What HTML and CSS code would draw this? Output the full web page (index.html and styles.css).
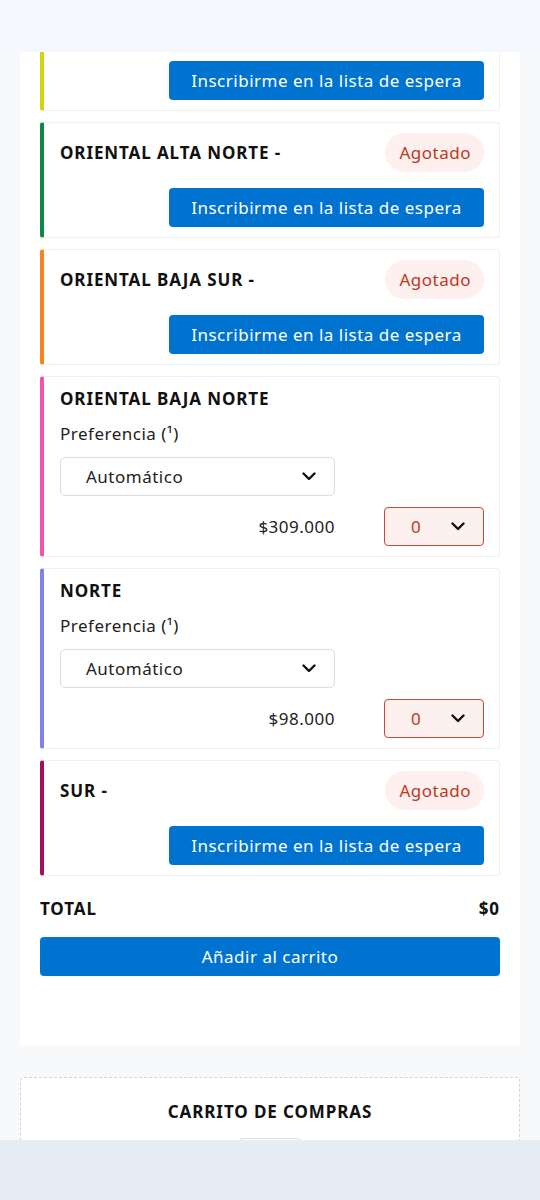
FILE: index.html
```html
<!DOCTYPE html>
<html lang="es">
<head>
    <meta charset="UTF-8">
    <meta name="viewport" content="width=device-width, initial-scale=1.0">
    <title>Entradas</title>
    <link rel="stylesheet" href="styles.css">
</head>
<body>
    <header class="topbar"></header>

    <main class="page">
        <section class="panel">
            <div class="zona zona-cut" style="--c: #d4d40a;">
                <div class="zona-actions">
                    <button class="btn-wait">Inscribirme en la lista de espera</button>
                </div>
            </div>

            <div class="zona" style="--c: #0b8a47;">
                <div class="zona-head">
                    <h3>ORIENTAL ALTA NORTE -</h3>
                    <span class="badge">Agotado</span>
                </div>
                <div class="zona-actions">
                    <button class="btn-wait">Inscribirme en la lista de espera</button>
                </div>
            </div>

            <div class="zona" style="--c: #f7841e;">
                <div class="zona-head">
                    <h3>ORIENTAL BAJA SUR -</h3>
                    <span class="badge">Agotado</span>
                </div>
                <div class="zona-actions">
                    <button class="btn-wait">Inscribirme en la lista de espera</button>
                </div>
            </div>

            <div class="zona" style="--c: #f353ad;">
                <h3 class="zona-title">ORIENTAL BAJA NORTE</h3>
                <p class="pref">Preferencia (¹)</p>
                <div class="select-pref">
                    <span>Automático</span>
                    <svg class="chev" viewBox="0 0 14 9" width="14" height="9"><path d="M1.5 1.5 7 7l5.5-5.5" fill="none" stroke="#111" stroke-width="2.4" stroke-linecap="round" stroke-linejoin="round"/></svg>
                </div>
                <div class="price-row">
                    <span class="price">$309.000</span>
                    <div class="qty">
                        <span>0</span>
                        <svg class="chev" viewBox="0 0 14 9" width="14" height="9"><path d="M1.5 1.5 7 7l5.5-5.5" fill="none" stroke="#111" stroke-width="2.4" stroke-linecap="round" stroke-linejoin="round"/></svg>
                    </div>
                </div>
            </div>

            <div class="zona" style="--c: #7f80f2;">
                <h3 class="zona-title">NORTE</h3>
                <p class="pref">Preferencia (¹)</p>
                <div class="select-pref">
                    <span>Automático</span>
                    <svg class="chev" viewBox="0 0 14 9" width="14" height="9"><path d="M1.5 1.5 7 7l5.5-5.5" fill="none" stroke="#111" stroke-width="2.4" stroke-linecap="round" stroke-linejoin="round"/></svg>
                </div>
                <div class="price-row">
                    <span class="price">$98.000</span>
                    <div class="qty">
                        <span>0</span>
                        <svg class="chev" viewBox="0 0 14 9" width="14" height="9"><path d="M1.5 1.5 7 7l5.5-5.5" fill="none" stroke="#111" stroke-width="2.4" stroke-linecap="round" stroke-linejoin="round"/></svg>
                    </div>
                </div>
            </div>

            <div class="zona" style="--c: #a5105c;">
                <div class="zona-head">
                    <h3>SUR -</h3>
                    <span class="badge">Agotado</span>
                </div>
                <div class="zona-actions">
                    <button class="btn-wait">Inscribirme en la lista de espera</button>
                </div>
            </div>

            <div class="total">
                <span>TOTAL</span>
                <span>$0</span>
            </div>
            <button class="btn-cart">Añadir al carrito</button>
        </section>

        <section class="cart">
            <h2>CARRITO DE COMPRAS</h2>
            <div class="cart-pill"></div>
        </section>
    </main>

    <nav class="bottombar"></nav>
</body>
</html>
```

FILE: styles.css
```css
* {
    box-sizing: border-box;
}

body {
    margin: 0;
    font-family: "Noto Sans", "DejaVu Sans", sans-serif;
    background: #f8f9fb;
    color: #1a1a1a;
    height: 1200px;
    overflow: hidden;
    letter-spacing: 0.5px;
}

.topbar {
    height: 52px;
    background: #f5f8fc;
}

.page {
    padding: 0 20px;
}

.panel {
    background: #fff;
    padding: 0 20px 70px;
}

.zona {
    border: 1px solid #f0f0f0;
    border-left: 4px solid var(--c);
    border-radius: 3px;
    padding: 10px 15px 10px 16px;
    margin-bottom: 11px;
}

.zona-cut {
    border-top: none;
    border-radius: 0 0 3px 3px;
    padding-top: 9px;
}

.zona-head {
    display: flex;
    justify-content: space-between;
    align-items: center;
    margin-bottom: 16px;
}

.zona h3 {
    margin: 0;
    font-size: 17px;
    font-weight: 700;
    color: #111;
    line-height: 24px;
    letter-spacing: 0.9px;
}

.badge {
    background: #fdf0ee;
    color: #c2361f;
    font-size: 17px;
    height: 39px;
    line-height: 39px;
    padding: 0 13px 0 14px;
    border-radius: 20px;
}

.zona-actions {
    display: flex;
    justify-content: flex-end;
}

.btn-wait, .btn-cart {
    background: #0073d1;
    color: #fff;
    border: none;
    border-radius: 4px;
    font-family: inherit;
    font-size: 17px;
    letter-spacing: 0.5px;
    height: 39px;
}

.btn-wait {
    width: 315px;
}

.pref {
    margin: 13px 0 13px;
    font-size: 17px;
    line-height: 20px;
    color: #222;
}

.select-pref {
    width: 275px;
    height: 39px;
    border: 1px solid #dcdcdc;
    border-radius: 5px;
    display: flex;
    align-items: center;
    justify-content: space-between;
    padding: 0 18px 0 25px;
    font-size: 17px;
    color: #222;
}

.price-row {
    display: flex;
    align-items: center;
    margin-top: 11px;
}

.price {
    width: 275px;
    text-align: right;
    font-size: 17px;
    color: #222;
}

.qty {
    margin-left: auto;
    width: 100px;
    height: 39px;
    border: 1px solid #c94a36;
    border-radius: 4px;
    background: #fdf1ef;
    display: flex;
    align-items: center;
    justify-content: space-between;
    padding: 0 18px 0 26px;
    font-size: 17px;
    color: #c2361f;
}

.total {
    display: flex;
    justify-content: space-between;
    font-weight: 700;
    font-size: 17px;
    letter-spacing: 0.9px;
    color: #111;
    margin-top: 21px;
    line-height: 24px;
}

.btn-cart {
    display: block;
    width: 100%;
    margin-top: 16px;
}

.cart {
    margin-top: 31px;
    background: #fff;
    border: 1px dashed #d4d4d4;
    border-radius: 4px;
    padding: 22px 0 0;
    text-align: center;
    height: 100px;
}

.cart h2 {
    margin: 0;
    font-size: 17px;
    font-weight: 700;
    letter-spacing: 0.9px;
    color: #111;
    line-height: 24px;
}

.cart-pill {
    width: 68px;
    height: 30px;
    margin: 14px auto 0;
    border: 1px solid #ddd;
    border-radius: 8px;
}

.bottombar {
    position: fixed;
    left: 0;
    right: 0;
    bottom: 0;
    height: 60px;
    background: #e6edf5;
}
```
